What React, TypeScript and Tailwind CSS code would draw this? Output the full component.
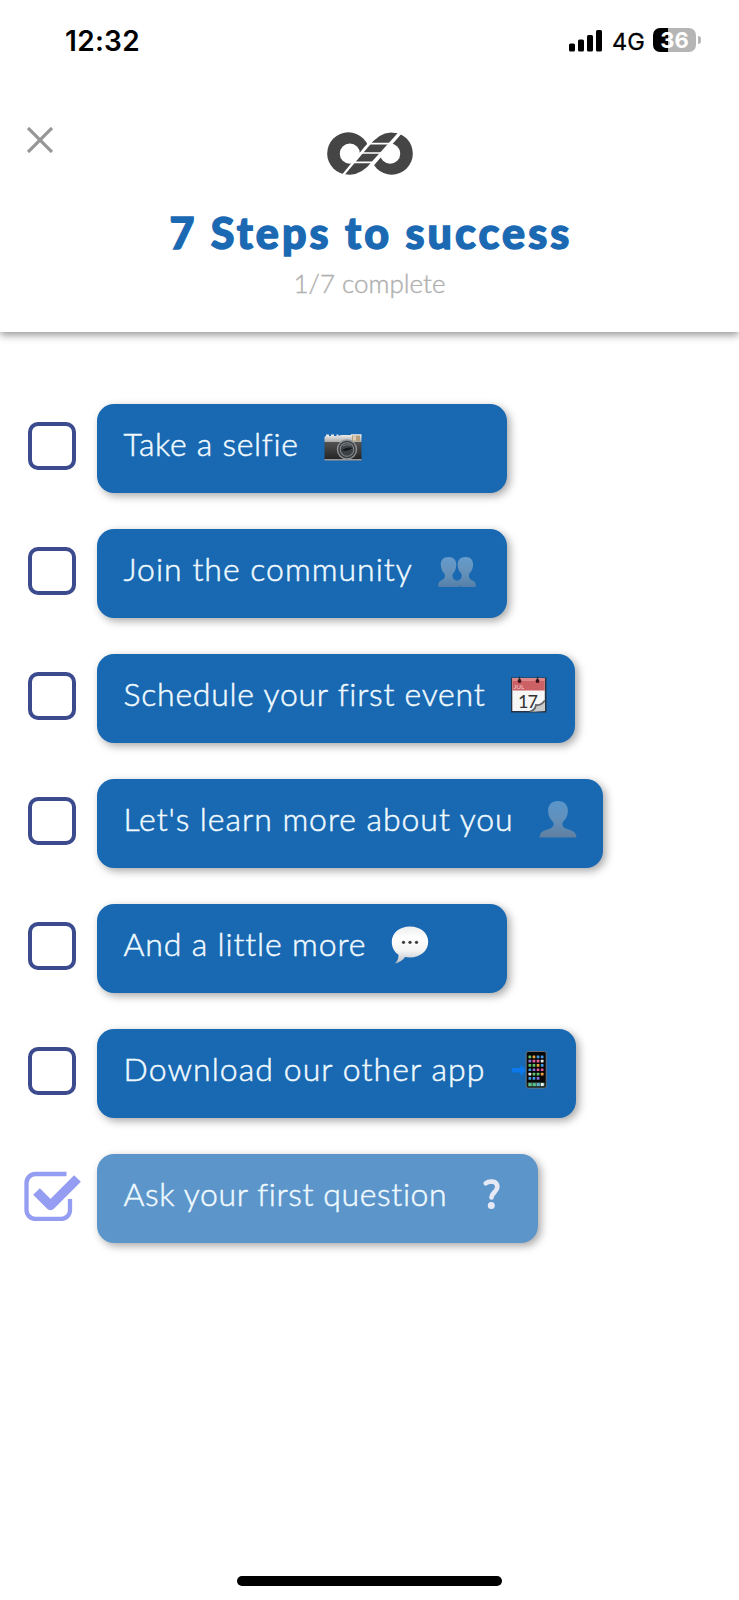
import type { ReactNode } from "react"

interface Step {
  label: string
  icon: ReactNode
  width: string
  labelStyle: string
  done?: boolean
}

function CameraIcon() {
  return (
    <svg viewBox="0 0 38 38" className="size-[38px]">
      <defs>
        <linearGradient id="camBody" x1="0" y1="0" x2="0" y2="1">
          <stop offset="0" stopColor="#555" />
          <stop offset="1" stopColor="#222" />
        </linearGradient>
        <linearGradient id="camTop" x1="0" y1="0" x2="0" y2="1">
          <stop offset="0" stopColor="#f2f2f0" />
          <stop offset="1" stopColor="#a9aaab" />
        </linearGradient>
      </defs>
      <rect x="0.5" y="15" width="37" height="19" rx="0.8" fill="url(#camBody)" />
      <path d="M.5 16V11l1.5-1V8.600h3V10h2V8.600h3V10h2.500V8.600h2V10L17 9h10V8.300h10.500V16z" fill="url(#camTop)" />
      <rect x="28" y="9.500" width="8" height="5.500" fill="#b39e79" />
      <path d="M29 9.500h3v5h-3z" fill="#d8ceb8" />
      <path d="M.5 33h37v1.500H.5z" fill="#999" />
      <circle cx="23" cy="23.500" r="10.200" fill="#8e9294" />
      <circle cx="23" cy="23.500" r="8.800" fill="#3a3d40" />
      <circle cx="23" cy="23.500" r="7.300" fill="#858a8d" />
      <circle cx="23" cy="23.500" r="6.300" fill="#3c4146" />
      <path d="M17.500 24.500q5.500-4 11-2.500q-4 4-11 2.500z" fill="#15181b" />
      <path d="M19 20q4-2.500 7.500-.5" stroke="#777d82" strokeWidth="1" fill="none" />
    </svg>
  )
}

function PeopleIcon() {
  return (
    <svg viewBox="0 0 38 38" className="size-[38px]">
      <defs>
        <linearGradient id="people" x1="0" y1="5" x2="0" y2="36" gradientUnits="userSpaceOnUse">
          <stop offset="0" stopColor="#669ccd" />
          <stop offset=".6" stopColor="#6490b8" />
          <stop offset="1" stopColor="#557fa8" />
        </linearGradient>
      </defs>
      <g fill="url(#people)">
        <path d="M10.500 6c-5.500 0-7.900 3.500-7.700 8 .1 4 1.800 7 3.900 9 .6 3-.2 5-2.600 6-2.300 1-3.800 2-3.800 4.500V36h21v-2.500c0-2.500-1.800-3.500-4.200-4.500-2.200-1-3-3-2.500-6 2.200-2 3.500-5 3.700-9 .1-4.500-2.300-8-7.800-8z" />
        <path d="M27.500 6c-5.500 0-8 3.500-7.800 8 .1 4 1.800 7 3.900 9 .6 3-.2 5-2.600 6l-2.500 1 4 6h15.200v-2.500c0-2.500-1.800-3.500-4.200-4.500-2.200-1-3-3-2.500-6 2.200-2 3.900-5 4.100-9 .1-4.500-2.100-8-7.600-8z" />
      </g>
    </svg>
  )
}

function PersonIcon() {
  return (
    <svg viewBox="0 0 38 38" className="size-[38px]">
      <defs>
        <linearGradient id="person" x1="0" y1="0" x2="0" y2="1">
          <stop offset="0" stopColor="#5a96cb" />
          <stop offset=".55" stopColor="#628fb9" />
          <stop offset="1" stopColor="#607f9f" />
        </linearGradient>
      </defs>
      <path
        d="M19 0c-6.500 0-10 4-9.900 10 .1 5 2.200 8.500 5.200 11.200.8 3-.1 5-3.200 6.300C6 29.700 1 29.500.5 36.500h37c-.5-7-5.500-6.800-10.600-9-3.100-1.300-4-3.300-3.200-6.300 3-2.700 5.100-6.200 5.200-11.200C29 4 25.500 0 19 0z"
        fill="url(#person)"
      />
    </svg>
  )
}

function CalendarIcon() {
  return (
    <svg viewBox="0 0 38 38" className="size-[38px]">
      <rect x="1" y="1.500" width="35.500" height="35" fill="#273444" />
      <rect x="2.300" y="2" width="32.500" height="33" fill="#f6f6f6" />
      <rect x="2.300" y="2" width="32.500" height="12.500" fill="#cb6065" />
      <path d="M2.300 2h32.500v3H2.300z" fill="#dc868a" />
      <text x="3.500" y="12.500" fontSize="6.500" fill="#f3d0d1" fontFamily="Lato, sans-serif">JUL</text>
      <circle cx="9.500" cy="5" r="1.900" fill="#3c1015" />
      <circle cx="27.500" cy="5" r="1.900" fill="#3c1015" />
      <path d="M9.500.5v4M27.500.5v4" stroke="#233" strokeWidth="1.300" />
      <path d="M19 36c5-1 6-4 6.500-7 4 .5 7.500-2.500 9.300-5.500V35z" fill="#c9cacb" />
      <path d="M20 35.500c4-1 5.500-3.500 6-6.500 3.500.5 7-2 8.800-4.500" fill="none" stroke="#666" strokeWidth="1.800" />
      <text x="8" y="31.500" fontSize="18" letterSpacing="-1" fill="#333" fontFamily="Lato, sans-serif">17</text>
    </svg>
  )
}

function BubbleIcon() {
  return (
    <svg viewBox="0 0 38 38" className="size-[38px]">
      <defs>
        <linearGradient id="bubble" x1="0" y1="0" x2="0" y2="1">
          <stop offset="0" stopColor="#eceded" />
          <stop offset=".3" stopColor="#fff" />
          <stop offset=".65" stopColor="#f4f4f4" />
          <stop offset="1" stopColor="#b9bfc6" />
        </linearGradient>
      </defs>
      <path
        d="M19 .5C8.500.5.800 7 .8 15.800c0 6 2.700 10.500 6.700 13 .2 3.500-1.300 6.700-3.500 8.700 4.500-.8 8-3.500 10-6.500 1.500.3 3.200.5 5 .5 10.500 0 18.200-6.700 18.200-15.700C37.200 7 29.500.5 19 .5z"
        fill="url(#bubble)"
      />
      <g fill="#3c3c3c">
        <circle cx="12.500" cy="16.300" r="1.600" />
        <circle cx="19" cy="16.300" r="1.600" />
        <circle cx="25.500" cy="16.300" r="1.600" />
      </g>
    </svg>
  )
}

const appColors = ["#61c46b", "#e9e9e9", "#e35d9b", "#8c75d8", "#3f9be8", "#eda23e"]

function PhoneIcon() {
  return (
    <svg viewBox="0 0 38 38" className="size-[38px]">
      <path d="M0 17h8.500v-3.500L14 19.500 8.500 25v-3.500H0z" fill="#0b78ec" />
      <rect x="14.200" y=".5" width="20" height="36.500" rx="2" fill="#070707" stroke="#777" strokeWidth=".9" />
      {Array.from({ length: 23 }, (_, i) => (
        <rect
          key={i}
          x={16.5 + (i % 4) * 4.1}
          y={4.5 + Math.floor(i / 4) * 4.3}
          width="2.700"
          height="2.700"
          rx=".5"
          fill={appColors[(i * 5 + Math.floor(i / 3)) % 6]}
        />
      ))}
      <rect x="15.700" y="31.500" width="17" height="4" rx=".5" fill="#447064" />
      <path d="M16.700 32.200h2.700v2.700h-2.700zM21 32.200h2.700v2.700H21z" fill="#5ac989" />
      <path d="M25 32.200h2.700v2.700H25z" fill="#68b4dc" />
      <path d="M29 32.200h2.700v2.700H29z" fill="#fff" />
    </svg>
  )
}

function QuestionIcon() {
  return (
    <svg viewBox="0 0 38 38" className="size-[38px]">
      <path
        d="M12.800 7.200C15.500 5 24.300 4 24.300 11c0 5-5.800 5.500-5.800 10.500"
        fill="none"
        stroke="#e6e9f5"
        strokeWidth="4.700"
        strokeLinecap="round"
      />
      <circle cx="18.300" cy="29.500" r="3.500" fill="#e6e9f5" />
    </svg>
  )
}

function Logo() {
  return (
    <svg viewBox="50 37 256 127" className="h-[43px] w-[86px]">
      <g fill="#454545">
        <circle cx="113.500" cy="100.500" r="63" />
        <circle cx="242.500" cy="100.500" r="63" />
      </g>
      <g fill="#fff">
        <circle cx="118" cy="101" r="30" />
        <circle cx="238" cy="101" r="30" />
      </g>
      {/* twist running between the two loops */}
      <path d="M91 168L160 83Q200 32 250 32L275 38L199 125Q165 170 115 170z" fill="#fff" />
      <path d="M104 162L172 82Q205 38 240 38L260 40L186 122Q155 163 118 163.500z" fill="#454545" />
      <path d="M172 71h68M150 99h64M130 127h60" stroke="#fff" strokeWidth="5" />
    </svg>
  )
}

function Checkbox({ done }: { done?: boolean }) {
  if (!done) {
    return <div className="ml-[28px] size-12 rounded-[10px] border-4 border-[#3c4a8e]" />
  }
  return (
    <svg viewBox="0 0 58 50" className="ml-6 h-[50px] w-[58px]" fill="none" stroke="#949df1">
      <path d="M42.500 3H11.500a9 9 0 0 0-9 9v27a9 9 0 0 0 9 9H37a9 9 0 0 0 9-9V28" strokeWidth="4.300" />
      <path d="M12 20L26.500 34.500 53.500 7.500" strokeWidth="14" stroke="#fff" />
      <path d="M12.500 20.500L26.500 34.500 53.500 7.500" strokeWidth="9.500" strokeLinejoin="round" />
    </svg>
  )
}

const steps: Step[] = [
  { label: "Take a selfie", icon: <CameraIcon />, width: "w-[410px]", labelStyle: "w-[174px] tracking-[0.700px]" },
  { label: "Join the community", icon: <PeopleIcon />, width: "w-[410px]", labelStyle: "w-[288px] tracking-[1px]" },
  { label: "Schedule your first event", icon: <CalendarIcon />, width: "w-[478px]", labelStyle: "w-[360px] tracking-[0.750px]" },
  { label: "Let's learn more about you", icon: <PersonIcon />, width: "w-[506px]", labelStyle: "w-[389px] tracking-[0.950px]" },
  { label: "And a little more", icon: <BubbleIcon />, width: "w-[410px]", labelStyle: "w-[241px] tracking-[0.850px]" },
  { label: "Download our other app", icon: <PhoneIcon />, width: "w-[479px]", labelStyle: "w-[362px] tracking-[1.080px]" },
  { label: "Ask your first question", icon: <QuestionIcon />, width: "w-[441px]", labelStyle: "w-[323px] tracking-[0.620px]", done: true },
]

function StepRow({ label, icon, width, labelStyle, done }: Step) {
  return (
    <li className="flex h-[89px] items-center">
      <div className="w-[96.500px] shrink-0 pb-1">
        <Checkbox done={done} />
      </div>
      <div
        className={`flex h-[89px] gap-[26.500px] rounded-[17px] pl-[27px] shadow-[3px_3px_8px_rgba(0,0,0,0.35)] ${
          done ? "bg-[#5c95ca]" : "bg-[#1868b2]"
        } ${width}`}
      >
        <span
          className={`shrink-0 pt-5 text-[32px] leading-[40px] font-light whitespace-nowrap text-[#f0faff] [-webkit-text-stroke:0.5px_#f0faff] ${labelStyle}`}
        >
          {label}
        </span>
        <span className="mt-[22px] shrink-0">{icon}</span>
      </div>
    </li>
  )
}

function StatusBar() {
  return (
    <div className="flex h-20 justify-between pr-[38.500px] pl-[65px] font-[Inter,sans-serif] text-black">
      <span className="pt-[21px] text-[28px] leading-10 font-semibold tracking-[0.300px]">12:32</span>
      <div className="flex pt-7">
        <svg viewBox="0 0 33 22" className="mt-[1.500px] h-[22px] w-[33px]">
          <rect x="0" y="13.500" width="6" height="8" rx="1.500" />
          <rect x="9" y="9.500" width="6" height="12" rx="1.500" />
          <rect x="18" y="5" width="6" height="16.500" rx="1.500" />
          <rect x="27" y="0" width="6" height="21.500" rx="1.500" />
        </svg>
        <span className="ml-[10px] w-[31px] text-[23.500px] leading-7 [-webkit-text-stroke:0.300px_#000]">4G</span>
        <div className="ml-[10px] flex h-6 w-[43px] items-center justify-center rounded-[7px] bg-[linear-gradient(to_right,#000_36%,#b5b5b5_36%)]">
          <span className="text-[22px] leading-6 font-bold text-white">36</span>
        </div>
        <div className="mt-2 ml-[2px] h-2 w-[2.500px] rounded-r-full bg-[#b5b5b5]" />
      </div>
    </div>
  )
}

export default function App() {
  return (
    <div className="flex h-[1600px] w-[739px] flex-col overflow-hidden bg-white font-[Lato,sans-serif]">
      <header className="h-[332px] shadow-[0_3px_8px_rgba(0,0,0,0.42)]">
        <StatusBar />
        <div className="flex h-[104px] items-start justify-between px-[27px] pt-[47px]">
          <svg viewBox="0 0 26 26" className="size-[26px]" stroke="#979797" strokeWidth="3.300">
            <path d="M1 1l24 24M25 1L1 25" />
          </svg>
          <div className="pt-[5px]">
            <Logo />
          </div>
          <div className="w-[26px]" />
        </div>
        <h1 className="mt-[23px] pl-[3px] text-center text-[43px] leading-[52px] font-black tracking-[3.100px] text-[#1b69b3] [-webkit-text-stroke:1.400px_#1b69b3]">
          7 Steps to success
        </h1>
        <p className="mt-[8px] text-center text-[26px] leading-8 font-light text-[#b0b0b0] [-webkit-text-stroke:0.400px_#b0b0b0]">
          1/7 complete
        </p>
      </header>
      <ul className="mt-[71.500px] flex grow flex-col gap-9">
        {steps.map((step) => (
          <StepRow key={step.label} {...step} />
        ))}
      </ul>
      <div className="mx-auto mb-[14px] h-[10px] w-[265px] rounded-full bg-black" />
    </div>
  )
}
